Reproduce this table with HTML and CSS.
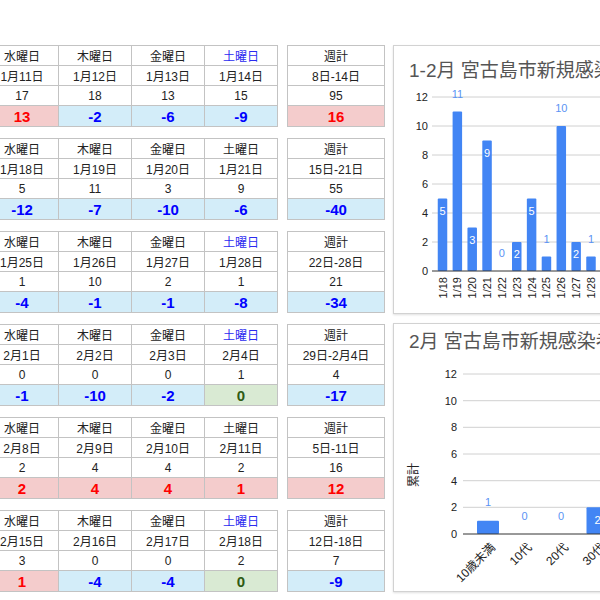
FILE: index.html
```html
<!DOCTYPE html>
<html lang="ja">
<head>
<meta charset="utf-8">
<title>宮古島市 新規感染者数</title>
<link rel="stylesheet" href="styles.css">
</head>
<body>
<div class="page">
  <div class="weeks">
    <div class="week">
      <div class="grid days">
        <div class="cell">水曜日</div><div class="cell">木曜日</div><div class="cell">金曜日</div><div class="cell sat">土曜日</div>
        <div class="cell">1月11日</div><div class="cell">1月12日</div><div class="cell">1月13日</div><div class="cell">1月14日</div>
        <div class="cell">17</div><div class="cell">18</div><div class="cell">13</div><div class="cell">15</div>
        <div class="cell diff up">13</div><div class="cell diff down">-2</div><div class="cell diff down">-6</div><div class="cell diff down">-9</div>
      </div>
      <div class="grid total">
        <div class="cell">週計</div><div class="cell">8日-14日</div><div class="cell">95</div><div class="cell diff up">16</div>
      </div>
    </div>
    <div class="week">
      <div class="grid days">
        <div class="cell">水曜日</div><div class="cell">木曜日</div><div class="cell">金曜日</div><div class="cell">土曜日</div>
        <div class="cell">1月18日</div><div class="cell">1月19日</div><div class="cell">1月20日</div><div class="cell">1月21日</div>
        <div class="cell">5</div><div class="cell">11</div><div class="cell">3</div><div class="cell">9</div>
        <div class="cell diff down">-12</div><div class="cell diff down">-7</div><div class="cell diff down">-10</div><div class="cell diff down">-6</div>
      </div>
      <div class="grid total">
        <div class="cell">週計</div><div class="cell">15日-21日</div><div class="cell">55</div><div class="cell diff down">-40</div>
      </div>
    </div>
    <div class="week">
      <div class="grid days">
        <div class="cell">水曜日</div><div class="cell">木曜日</div><div class="cell">金曜日</div><div class="cell sat">土曜日</div>
        <div class="cell">1月25日</div><div class="cell">1月26日</div><div class="cell">1月27日</div><div class="cell">1月28日</div>
        <div class="cell">1</div><div class="cell">10</div><div class="cell">2</div><div class="cell">1</div>
        <div class="cell diff down">-4</div><div class="cell diff down">-1</div><div class="cell diff down">-1</div><div class="cell diff down">-8</div>
      </div>
      <div class="grid total">
        <div class="cell">週計</div><div class="cell">22日-28日</div><div class="cell">21</div><div class="cell diff down">-34</div>
      </div>
    </div>
    <div class="week">
      <div class="grid days">
        <div class="cell">水曜日</div><div class="cell">木曜日</div><div class="cell">金曜日</div><div class="cell sat">土曜日</div>
        <div class="cell">2月1日</div><div class="cell">2月2日</div><div class="cell">2月3日</div><div class="cell">2月4日</div>
        <div class="cell">0</div><div class="cell">0</div><div class="cell">0</div><div class="cell">1</div>
        <div class="cell diff down">-1</div><div class="cell diff down">-10</div><div class="cell diff down">-2</div><div class="cell diff same">0</div>
      </div>
      <div class="grid total">
        <div class="cell">週計</div><div class="cell">29日-2月4日</div><div class="cell">4</div><div class="cell diff down">-17</div>
      </div>
    </div>
    <div class="week">
      <div class="grid days">
        <div class="cell">水曜日</div><div class="cell">木曜日</div><div class="cell">金曜日</div><div class="cell">土曜日</div>
        <div class="cell">2月8日</div><div class="cell">2月9日</div><div class="cell">2月10日</div><div class="cell">2月11日</div>
        <div class="cell">2</div><div class="cell">4</div><div class="cell">4</div><div class="cell">2</div>
        <div class="cell diff up">2</div><div class="cell diff up">4</div><div class="cell diff up">4</div><div class="cell diff up">1</div>
      </div>
      <div class="grid total">
        <div class="cell">週計</div><div class="cell">5日-11日</div><div class="cell">16</div><div class="cell diff up">12</div>
      </div>
    </div>
    <div class="week">
      <div class="grid days">
        <div class="cell">水曜日</div><div class="cell">木曜日</div><div class="cell">金曜日</div><div class="cell sat">土曜日</div>
        <div class="cell">2月15日</div><div class="cell">2月16日</div><div class="cell">2月17日</div><div class="cell">2月18日</div>
        <div class="cell">3</div><div class="cell">0</div><div class="cell">0</div><div class="cell">2</div>
        <div class="cell diff up">1</div><div class="cell diff down">-4</div><div class="cell diff down">-4</div><div class="cell diff same">0</div>
      </div>
      <div class="grid total">
        <div class="cell">週計</div><div class="cell">12日-18日</div><div class="cell">7</div><div class="cell diff down">-9</div>
      </div>
    </div>
  </div>

  <div class="charts">
    <div class="card">
      <svg class="chart" width="230" height="267" viewBox="0 0 230 267">
        <text class="title" x="15" y="31">1-2月 宮古島市新規感染者数</text>
        <g class="grid-lines">
          <line x1="38" y1="51" x2="230" y2="51"/>
          <line x1="38" y1="80" x2="230" y2="80"/>
          <line x1="38" y1="109" x2="230" y2="109"/>
          <line x1="38" y1="138" x2="230" y2="138"/>
          <line x1="38" y1="167" x2="230" y2="167"/>
          <line x1="38" y1="196" x2="230" y2="196"/>
        </g>
        <g class="ylab" text-anchor="end">
          <text x="34" y="55">12</text>
          <text x="34" y="84">10</text>
          <text x="34" y="113">8</text>
          <text x="34" y="142">6</text>
          <text x="34" y="171">4</text>
          <text x="34" y="200">2</text>
          <text x="34" y="229">0</text>
        </g>
        <g class="bars">
          <rect x="43.75" y="152.5" width="9.5" height="72.5" rx="1"/>
          <rect x="58.6" y="65.5" width="9.5" height="159.5" rx="1"/>
          <rect x="73.45" y="181.5" width="9.5" height="43.5" rx="1"/>
          <rect x="88.3" y="94.5" width="9.5" height="130.5" rx="1"/>
          <rect x="118" y="196" width="9.5" height="29" rx="1"/>
          <rect x="132.85" y="152.5" width="9.5" height="72.5" rx="1"/>
          <rect x="147.7" y="210.5" width="9.5" height="14.5" rx="1"/>
          <rect x="162.55" y="80" width="9.5" height="145" rx="1"/>
          <rect x="177.4" y="196" width="9.5" height="29" rx="1"/>
          <rect x="192.25" y="210.5" width="9.5" height="14.5" rx="1"/>
        </g>
        <line class="axis" x1="38" y1="225" x2="230" y2="225"/>
        <g class="in" text-anchor="middle">
          <text x="48.5" y="168.5">5</text>
          <text x="78.2" y="197.5">3</text>
          <text x="93.05" y="110.5">9</text>
          <text x="122.75" y="212">2</text>
          <text x="137.6" y="168.5">5</text>
          <text x="182.15" y="212">2</text>
        </g>
        <g class="out" text-anchor="middle">
          <text x="63.35" y="51.5">11</text>
          <text x="107.9" y="211">0</text>
          <text x="152.45" y="196.5">1</text>
          <text x="167.3" y="66">10</text>
          <text x="197" y="196.5">1</text>
        </g>
        <g class="xlab" text-anchor="end">
          <text transform="translate(52.5 231) rotate(-90)">1/18</text>
          <text transform="translate(67.35 231) rotate(-90)">1/19</text>
          <text transform="translate(82.2 231) rotate(-90)">1/20</text>
          <text transform="translate(97.05 231) rotate(-90)">1/21</text>
          <text transform="translate(111.9 231) rotate(-90)">1/22</text>
          <text transform="translate(126.75 231) rotate(-90)">1/23</text>
          <text transform="translate(141.6 231) rotate(-90)">1/24</text>
          <text transform="translate(156.45 231) rotate(-90)">1/25</text>
          <text transform="translate(171.3 231) rotate(-90)">1/26</text>
          <text transform="translate(186.15 231) rotate(-90)">1/27</text>
          <text transform="translate(201 231) rotate(-90)">1/28</text>
        </g>
      </svg>
    </div>
    <div class="card">
      <svg class="chart" width="230" height="267" viewBox="0 0 230 267">
        <text class="title" x="15" y="24">2月 宮古島市新規感染者数</text>
        <g class="grid-lines">
          <line x1="69" y1="50" x2="230" y2="50"/>
          <line x1="69" y1="76.7" x2="230" y2="76.7"/>
          <line x1="69" y1="103.3" x2="230" y2="103.3"/>
          <line x1="69" y1="130" x2="230" y2="130"/>
          <line x1="69" y1="156.7" x2="230" y2="156.7"/>
          <line x1="69" y1="183.3" x2="230" y2="183.3"/>
        </g>
        <g class="ylab" text-anchor="end">
          <text x="63" y="54">12</text>
          <text x="63" y="80.7">10</text>
          <text x="63" y="107.3">8</text>
          <text x="63" y="134">6</text>
          <text x="63" y="160.7">4</text>
          <text x="63" y="187.3">2</text>
          <text x="63" y="214">0</text>
        </g>
        <text class="ytitle" text-anchor="middle" transform="translate(24 151) rotate(-90)">累計</text>
        <g class="bars">
          <rect x="83" y="196.7" width="22" height="13.3" rx="1"/>
          <rect x="192.5" y="183.3" width="22" height="26.7" rx="1"/>
        </g>
        <line class="axis" x1="69" y1="210" x2="230" y2="210"/>
        <g class="out" text-anchor="middle">
          <text x="94" y="182">1</text>
          <text x="130.5" y="196">0</text>
          <text x="167" y="196">0</text>
        </g>
        <g class="in" text-anchor="middle">
          <text x="203.5" y="200">2</text>
        </g>
        <g class="xlab2" text-anchor="end">
          <text transform="translate(102 224) rotate(-45)">10歳未満</text>
          <text transform="translate(138.5 224) rotate(-45)">10代</text>
          <text transform="translate(175 224) rotate(-45)">20代</text>
          <text transform="translate(211.5 224) rotate(-45)">30代</text>
        </g>
      </svg>
    </div>
  </div>
</div>
</body>
</html>
```

FILE: styles.css
```css
html, body {
  margin: 0;
  padding: 0;
  width: 600px;
  height: 600px;
  overflow: hidden;
  background: #fff;
}

body {
  font-family: "Liberation Sans", Arial, "Noto Sans CJK JP", sans-serif;
  color: #222;
}

.page {
  display: flex;
  gap: 8px;
  margin-left: -15px;
  padding-top: 45px;
}

.weeks {
  display: flex;
  flex-direction: column;
  gap: 11px;
  flex: none;
}

.week {
  display: flex;
  gap: 9px;
}

.grid {
  display: grid;
  gap: 1px;
  padding: 1px;
  background: #c3c3c3;
  grid-template-rows: 19px 19px 19px 20px;
}

.days {
  grid-template-columns: repeat(4, 72px);
}

.total {
  grid-template-columns: 96px;
}

.cell {
  background: #fff;
  display: flex;
  align-items: center;
  justify-content: center;
  font-size: 12px;
  color: #222;
  white-space: nowrap;
}

.sat {
  color: #2b2bf0;
}

.diff {
  font-weight: bold;
  font-size: 15px;
}

.up {
  background: #f4cccc;
  color: #ff0000;
}

.down {
  background: #d3edf9;
  color: #0000ff;
}

.same {
  background: #d9ead3;
  color: #2f5b14;
}

.charts {
  display: flex;
  flex-direction: column;
  gap: 9px;
  flex: none;
}

.card {
  width: 232px;
  height: 269px;
  box-sizing: border-box;
  border: 1px solid #d2d2d2;
  box-shadow: 0 1px 2px rgba(0, 0, 0, 0.12);
  background: #fff;
  overflow: hidden;
}

.chart {
  display: block;
  font-family: "Liberation Sans", Arial, "Noto Sans CJK JP", sans-serif;
}

.title {
  font-size: 19px;
  fill: #555;
}

.grid-lines line {
  stroke: #d0d0d0;
  stroke-width: 1;
}

.axis {
  stroke: #333;
  stroke-width: 1;
}

.ylab text {
  font-size: 11px;
  fill: #222;
}

.ytitle {
  font-size: 12px;
  fill: #222;
}

.bars rect {
  fill: #4285f4;
}

.in text {
  font-size: 11px;
  fill: #fff;
}

.out text {
  font-size: 11px;
  fill: #5b93f4;
}

.xlab text {
  font-size: 11px;
  fill: #222;
}

.xlab2 text {
  font-size: 12px;
  fill: #222;
}
```
